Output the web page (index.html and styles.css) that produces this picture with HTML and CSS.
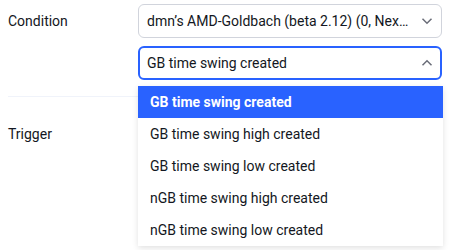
FILE: index.html
```html
<!DOCTYPE html>
<html lang="en">
<head>
    <meta charset="UTF-8">
    <title>Alert condition</title>
    <link rel="stylesheet" href="styles.css">
</head>
<body>
    <div class="form">
        <div class="row">
            <div class="label">Condition</div>
            <div class="fields">
                <div class="select">
                    <span class="value">dmn’s AMD-Goldbach (beta 2.12) (0, Nex…</span>
                    <svg class="chevron" width="12" height="8" viewBox="0 0 12 8"><path d="M1.5 1.8l4.5 4.4 4.5-4.4" fill="none" stroke="#6a6d78" stroke-width="1.5"/></svg>
                </div>
                <div class="select-wrap">
                    <div class="select open">
                        <span class="value">GB time swing created</span>
                        <svg class="chevron" width="12" height="8" viewBox="0 0 12 8"><path d="M1.5 6.2l4.5-4.4 4.5 4.4" fill="none" stroke="#6a6d78" stroke-width="1.5"/></svg>
                    </div>
                    <ul class="menu">
                        <li class="selected">GB time swing created</li>
                        <li>GB time swing high created</li>
                        <li>GB time swing low created</li>
                        <li>nGB time swing high created</li>
                        <li>nGB time swing low created</li>
                    </ul>
                </div>
            </div>
        </div>
        <div class="divider"></div>
        <div class="row">
            <div class="label">Trigger</div>
        </div>
    </div>
</body>
</html>
```

FILE: styles.css
```css
html, body {
    min-height: 250px;
}
body {
    margin: 0;
    padding: 0;
    background: #ffffff;
    font-family: Roboto, Arial, sans-serif;
    font-size: 14px;
    color: #131722;
}
.form {
    padding: 4px 18px 0 8px;
}
.row {
    display: flex;
    align-items: flex-start;
}
.label {
    width: 130px;
    flex-shrink: 0;
    line-height: 34px;
}
.fields {
    flex-grow: 1;
    display: flex;
    flex-direction: column;
    gap: 8px;
}
.select-wrap {
    position: relative;
}
.select {
    display: flex;
    align-items: center;
    justify-content: space-between;
    height: 34px;
    box-sizing: border-box;
    padding: 0 8px 0 8px;
    border: 1px solid #d1d4dc;
    border-radius: 6px;
}
.select.open {
    border: 2px solid #2962ff;
    padding-left: 7px;
    padding-right: 7px;
}
.value {
    white-space: nowrap;
    overflow: hidden;
}
.chevron {
    flex-shrink: 0;
    margin-right: 0;
}
.divider {
    height: 1px;
    background: #f0f3fa;
    margin: 16px 0 20px 0;
}
.menu {
    position: absolute;
    top: 40px;
    left: 0;
    width: 305px;
    margin: 0;
    padding: 0;
    list-style: none;
    background: #ffffff;
    box-shadow: 0 2px 6px rgba(0, 0, 0, 0.12);
}
.menu li {
    height: 32px;
    line-height: 32px;
    padding-left: 12px;
}
.menu li.selected {
    background: #2962ff;
    color: #ffffff;
    font-weight: bold;
}
```
